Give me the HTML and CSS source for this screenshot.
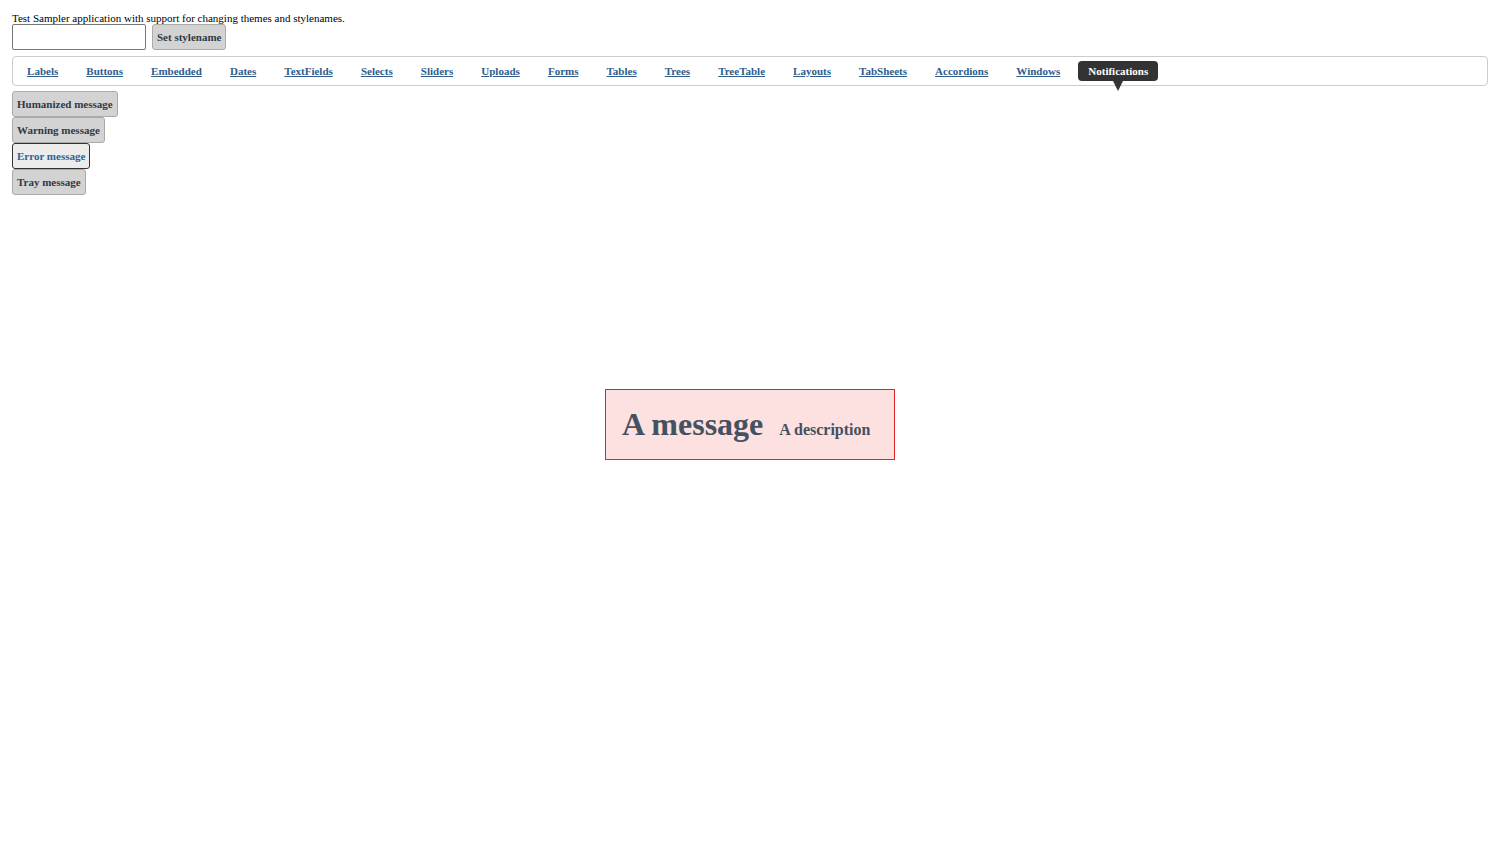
FILE: index.html
```html
<!DOCTYPE html>
<html>
<head>
<meta charset="utf-8">
<link rel="stylesheet" href="styles.css">
</head>
<body>
<div class="intro">Test Sampler application with support for changing themes and stylenames.</div>
<div class="stylerow">
  <input class="field" type="text">
  <button class="btn">Set stylename</button>
</div>
<nav class="tabs">
  <a class="tab" href="#">Labels</a>
  <a class="tab" href="#">Buttons</a>
  <a class="tab" href="#">Embedded</a>
  <a class="tab" href="#">Dates</a>
  <a class="tab" href="#">TextFields</a>
  <a class="tab" href="#">Selects</a>
  <a class="tab" href="#">Sliders</a>
  <a class="tab" href="#">Uploads</a>
  <a class="tab" href="#">Forms</a>
  <a class="tab" href="#">Tables</a>
  <a class="tab" href="#">Trees</a>
  <a class="tab" href="#">TreeTable</a>
  <a class="tab" href="#">Layouts</a>
  <a class="tab" href="#">TabSheets</a>
  <a class="tab" href="#">Accordions</a>
  <a class="tab" href="#">Windows</a>
  <a class="tab active" href="#">Notifications</a>
</nav>
<div class="stack">
  <button class="btn">Humanized message</button>
  <button class="btn">Warning message</button>
  <button class="btn focused">Error message</button>
  <button class="btn">Tray message</button>
</div>
<div class="notice">
  <span class="notice-title">A message</span>
  <span class="notice-desc">A description</span>
</div>
</body>
</html>
```
FILE: styles.css
```css
html, body {
  margin: 0;
  padding: 0;
  background: #fff;
}
body {
  padding: 12px;
  font-family: "Liberation Serif", "Times New Roman", serif;
  font-size: 11px;
  color: #000;
}
.intro {
  line-height: 12px;
  height: 12px;
}
.stylerow {
  display: flex;
  gap: 6px;
  height: 26px;
  margin-bottom: 6px;
}
.field {
  box-sizing: border-box;
  width: 134px;
  height: 26px;
  margin: 0;
  border: 1px solid #767676;
  border-radius: 2px;
  background: #fff;
  padding: 0 4px;
}
.btn {
  box-sizing: border-box;
  height: 26px;
  margin: 0;
  padding: 0 4px;
  border: 1px solid #aaa;
  border-radius: 3px;
  background: #d3d3d3;
  color: #2f3a45;
  font-family: "Liberation Serif", "Times New Roman", serif;
  font-size: 11px;
  font-weight: bold;
  text-align: left;
  line-height: 24px;
}
.btn.focused {
  background: #ececec;
  border-color: #333;
  color: #2e6299;
}
.tabs {
  box-sizing: border-box;
  height: 30px;
  border: 1px solid #ccc;
  border-radius: 4px;
  display: flex;
  align-items: center;
  margin-bottom: 5px;
}
.tab {
  position: relative;
  margin: 0 4px;
  padding: 0 10.05px;
  height: 20px;
  line-height: 20px;
  font-weight: bold;
  color: #2e5d8e;
  text-decoration: underline;
}
.tab.active {
  background: #333;
  color: #fff;
  text-decoration: none;
  border-radius: 4px;
}
.tab.active::after {
  content: "";
  position: absolute;
  left: 50%;
  bottom: -10px;
  margin-left: -10px;
  border: 10px solid transparent;
  border-bottom: 0;
  border-top: 10px solid #333;
  transform: scaleX(0.5);
}
.stack {
  display: flex;
  flex-direction: column;
  align-items: flex-start;
}
.notice {
  position: fixed;
  left: 605px;
  top: 389px;
  box-sizing: border-box;
  width: 290px;
  height: 71px;
  background: #fde0e0;
  border: 1px solid #e02424;
  display: flex;
  align-items: center;
  padding: 0 16px;
  gap: 16px;
  color: #44515e;
  font-weight: bold;
}
.notice-title {
  font-size: 32px;
}
.notice-desc {
  font-size: 16px;
  padding-top: 10px;
}
```
